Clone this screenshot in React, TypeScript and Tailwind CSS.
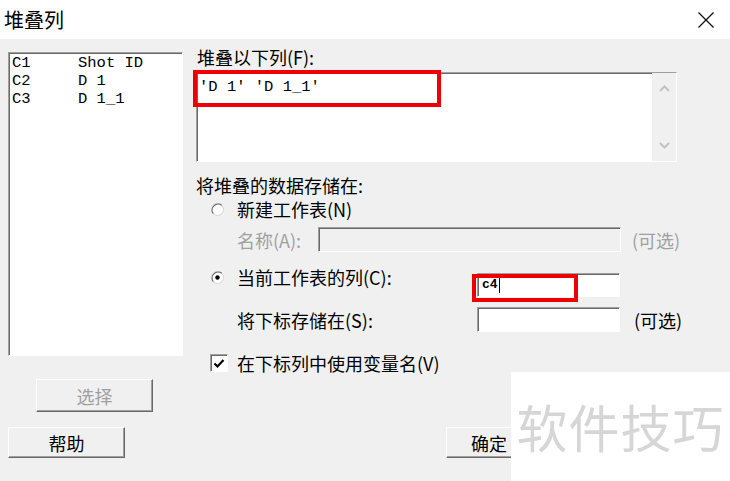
import React from 'react';

const cjk = "font-['Noto_Sans_CJK_SC','Noto_Sans',sans-serif]";
const mono = "font-['Liberation_Mono','Noto_Sans_CJK_SC',monospace]";

const sunken =
    'border border-t-[#a0a0a0] border-l-[#a0a0a0] border-b-white border-r-white shadow-[inset_1px_1px_0_#696969]';
const raised =
    'border border-t-white border-l-white border-b-[#696969] border-r-[#696969] shadow-[inset_-1px_-1px_0_#a0a0a0]';

const columns = [
    { id: 'C1', name: 'Shot ID' },
    { id: 'C2', name: 'D 1' },
    { id: 'C3', name: 'D 1_1' },
];

function Radio({ checked }: { checked?: boolean }) {
    return (
        <svg width="13" height="13" viewBox="0 0 13 13" className="shrink-0">
            <circle cx="6.5" cy="6.5" r="6" fill="#fff" stroke="#d4d4d4" />
            <path d="M2.3 10.7 A6 6 0 0 1 10.7 2.3" fill="none" stroke="#6e6e6e" strokeWidth="1.2" />
            {checked && <circle cx="6.5" cy="6.5" r="2.2" fill="#000" />}
        </svg>
    );
}

function Checkbox() {
    return (
        <div className={`flex h-[18px] w-[18px] shrink-0 items-center justify-center bg-white ${sunken}`}>
            <svg width="12" height="11" viewBox="0 0 12 11">
                <path d="M1.5 5.5 L4.5 8.5 L10.5 2" fill="none" stroke="#000" strokeWidth="2.2" />
            </svg>
        </div>
    );
}

function Chevron({ up }: { up?: boolean }) {
    return (
        <svg width="11" height="7" viewBox="0 0 11 7">
            <path
                d={up ? 'M1 6 L5.5 1.5 L10 6' : 'M1 1 L5.5 5.5 L10 1'}
                fill="none"
                stroke="#c2c2c2"
                strokeWidth="2"
            />
        </svg>
    );
}

function Button({ label, disabled, className }: { label: string; disabled?: boolean; className?: string }) {
    return (
        <div
            className={`flex items-center justify-center bg-[#f0f0f0] text-[18px] leading-5 ${raised} ${
                disabled ? 'text-[#a0a0a0]' : 'text-black'
            } ${className ?? ''}`}
        >
            {label}
        </div>
    );
}

export default function App() {
    return (
        <div className={`relative h-[481px] w-[730px] overflow-hidden bg-[#f0f0f0] text-black ${cjk}`}>
            {/* title bar */}
            <div className="flex h-[39px] items-center justify-between bg-white pl-1 pr-4">
                <span className="text-[20px] leading-6">堆叠列</span>
                <svg width="16" height="16" viewBox="0 0 16 16">
                    <path d="M0.5 0.5 L15.5 15.5 M15.5 0.5 L0.5 15.5" stroke="#111" strokeWidth="1.3" />
                </svg>
            </div>

            <div className="flex">
                {/* left column */}
                <div className="flex w-[183px] flex-col pl-2">
                    <div className={`mt-[13px] h-[304px] w-[175px] bg-white pl-[3px] pt-[2px] ${sunken}`}>
                        {columns.map((c) => (
                            <div key={c.id} className={`flex h-[18px] items-center text-[15.5px] ${mono}`}>
                                <span className="w-[66px]">{c.id}</span>
                                <span>{c.name}</span>
                            </div>
                        ))}
                    </div>
                    <Button label="选择" disabled className="ml-[28px] mt-[23px] h-[33px] w-[117px]" />
                    <Button label="帮助" className="mt-[15px] h-[31px] w-[117px]" />
                </div>

                {/* right column */}
                <div className="ml-[13px] flex w-[500px] flex-col text-[18px]">
                    <div className="mt-2 h-5 pl-px leading-5">堆叠以下列(F):</div>

                    <div className={`relative mt-[5px] flex h-[90px] w-[481px] bg-white ${sunken}`}>
                        <div className={`flex-1 pl-[2px] pt-[4px] text-[15.5px] leading-5 ${mono}`}>
                            'D 1' 'D 1_1'
                        </div>
                        <div className="flex w-[24px] flex-col items-center justify-between bg-[#f0f0f0] py-[12px]">
                            <Chevron up />
                            <Chevron />
                        </div>
                        <div className="absolute left-[-4px] top-[-3px] h-[37px] w-[248px] border-4 border-[#ee0000]" />
                    </div>

                    <div className="mt-[13px] h-5 leading-5">将堆叠的数据存储在:</div>

                    <div className="mt-[4px] flex h-5 items-center gap-[13px] pl-[15px] leading-5">
                        <Radio />
                        <span>新建工作表(N)</span>
                    </div>

                    <div className="mt-[8px] flex h-[25px] items-center pl-[41px] leading-5">
                        <span className="w-[81px] text-[#a0a0a0]">名称(A):</span>
                        <div className={`h-[25px] w-[303px] bg-[#f0f0f0] ${sunken}`} />
                        <span className="ml-[11px] text-[#a0a0a0]">(可选)</span>
                    </div>

                    <div className="mt-[15px] flex h-[30px] leading-5">
                        <div className="flex h-5 w-[281px] items-center gap-[13px] pl-[15px]">
                            <Radio checked />
                            <span>当前工作表的列(C):</span>
                        </div>
                        <div className={`relative mt-[6px] flex h-[24px] w-[143px] items-center bg-white pl-[4px] ${sunken}`}>
                            <span className={`text-[13px] font-bold leading-4 ${mono}`}>c4</span>
                            <span className="ml-px h-[15px] w-px bg-black" />
                            <div className="absolute left-[-6px] top-0 h-[28px] w-[106px] border-4 border-[#ee0000]" />
                        </div>
                    </div>

                    <div className="mt-[10px] flex h-[25px] items-center leading-5">
                        <span className="w-[281px] pl-[41px]">将下标存储在(S):</span>
                        <div className={`h-[25px] w-[143px] bg-white ${sunken}`} />
                        <span className="ml-[14px]">(可选)</span>
                    </div>

                    <div className="mt-[21px] flex h-5 items-center gap-[9px] pl-[14px] leading-5">
                        <Checkbox />
                        <span>在下标列中使用变量名(V)</span>
                    </div>

                    <Button label="确定" className="ml-[250px] mt-[54px] h-[31px] w-[86px]" />
                </div>
            </div>

            {/* watermark */}
            <div className="absolute bottom-0 left-[511px] right-0 top-[372px] flex items-center justify-center bg-white">
                <span className="text-[51px] leading-none tracking-[1px] text-[#d6d6d6]">软件技巧</span>
            </div>
        </div>
    );
}
